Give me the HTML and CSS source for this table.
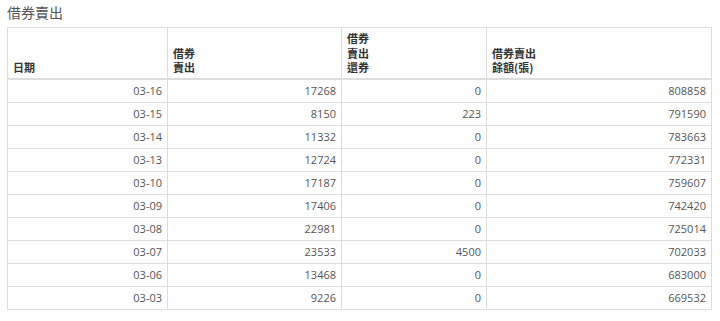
FILE: index.html
```html
<!DOCTYPE html>
<html>
<head>
<meta charset="utf-8">
<link rel="stylesheet" href="styles.css">
</head>
<body>
<div class="wrap">
  <h4 class="title">借券賣出</h4>
  <table class="grid">
    <colgroup>
      <col class="c1"><col class="c2"><col class="c3"><col class="c4">
    </colgroup>
    <thead>
      <tr>
        <th>日期</th>
        <th>借券<br>賣出</th>
        <th>借券<br>賣出<br>還券</th>
        <th>借券賣出<br>餘額(張)</th>
      </tr>
    </thead>
    <tbody>
      <tr><td>03-16</td><td>17268</td><td>0</td><td>808858</td></tr>
      <tr><td>03-15</td><td>8150</td><td>223</td><td>791590</td></tr>
      <tr><td>03-14</td><td>11332</td><td>0</td><td>783663</td></tr>
      <tr><td>03-13</td><td>12724</td><td>0</td><td>772331</td></tr>
      <tr><td>03-10</td><td>17187</td><td>0</td><td>759607</td></tr>
      <tr><td>03-09</td><td>17406</td><td>0</td><td>742420</td></tr>
      <tr><td>03-08</td><td>22981</td><td>0</td><td>725014</td></tr>
      <tr><td>03-07</td><td>23533</td><td>4500</td><td>702033</td></tr>
      <tr><td>03-06</td><td>13468</td><td>0</td><td>683000</td></tr>
      <tr><td>03-03</td><td>9226</td><td>0</td><td>669532</td></tr>
    </tbody>
  </table>
</div>
</body>
</html>
```
FILE: styles.css
```css
html, body {
  margin: 0;
  padding: 0;
  background: #fff;
}
body {
  font-family: "Open Sans", "Noto Sans CJK TC", sans-serif;
  color: #555;
}
.wrap {
  padding: 0 9px 0 7px;
}
.title {
  margin: 0;
  height: 27px;
  font-size: 14px;
  line-height: 25px;
  font-weight: normal;
  color: #555;
  font-family: "Open Sans", "Noto Sans CJK TC", sans-serif;
}
.grid {
  width: 704px;
  border-collapse: collapse;
  table-layout: fixed;
  font-size: 11px;
}
.c1 { width: 160px; }
.c2 { width: 174px; }
.c3 { width: 145px; }
.c4 { width: 225px; }
.grid th, .grid td {
  border: 1px solid #ddd;
}
.grid th {
  text-align: left;
  vertical-align: bottom;
  font-weight: bold;
  color: #333;
  line-height: 14.6px;
  padding: 3px 5px 3px 5px;
  border-bottom: 2px solid #ddd;
  font-family: "Noto Sans CJK TC", sans-serif;
  font-size: 11px;
}
.grid td {
  text-align: right;
  padding: 3px 5px 3px 5px;
  line-height: 16px;
  height: 16px;
  color: #555;
}
```
